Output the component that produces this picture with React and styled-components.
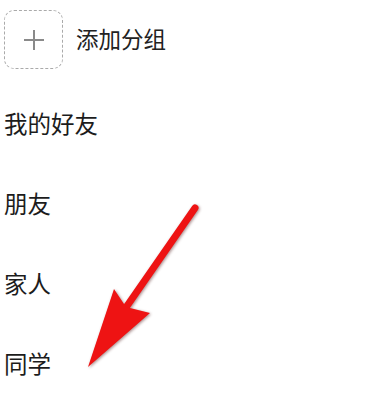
import React from "react";
import styled, { createGlobalStyle } from "styled-components";

const Global = createGlobalStyle`
  html, body { margin: 0; padding: 0; background: #ffffff; }
  body { font-family: "Noto Sans CJK SC", "Noto Sans", sans-serif; }
`;

const Page = styled.div`
  position: relative;
  width: 369px;
  height: 395px;
  overflow: hidden;
  background: #fff;
  padding: 10px 0 0 4px;
  box-sizing: border-box;
`;

const Header = styled.div`
  display: flex;
  align-items: center;
  gap: 13px;
  height: 59px;
`;

const AddBox = styled.div`
  width: 59px;
  height: 59px;
  box-sizing: border-box;
  border: 1.5px dashed #aaaaaa;
  border-radius: 10px;
  display: flex;
  align-items: center;
  justify-content: center;
`;

const HeaderLabel = styled.span`
  font-size: 22.5px;
  color: #222;
  line-height: 1;
  padding-bottom: 2px;
`;

const List = styled.div`
  margin-top: 15px;
  display: flex;
  flex-direction: column;
`;

const Item = styled.div`
  height: 80px;
  box-sizing: border-box;
  padding-bottom: 3px;
  display: flex;
  align-items: center;
  font-size: 23.5px;
  color: #1c1c1c;
`;

const ArrowLayer = styled.svg`
  position: absolute;
  left: 0;
  top: 0;
  width: 369px;
  height: 395px;
  pointer-events: none;
  filter: drop-shadow(1.5px 1.5px 1.5px rgba(60, 0, 0, 0.45));
`;

const groups = ["我的好友", "朋友", "家人", "同学"];

export default function App() {
  return (
    <>
      <Global />
      <Page>
        <Header>
          <AddBox>
            <svg width="22" height="22" viewBox="0 0 22 22">
              <path d="M11 1v20M1 11h20" stroke="#8a8a8a" strokeWidth="2" fill="none" />
            </svg>
          </AddBox>
          <HeaderLabel>添加分组</HeaderLabel>
        </Header>
        <List>
          {groups.map((g) => (
            <Item key={g}>{g}</Item>
          ))}
        </List>
        <ArrowLayer viewBox="0 0 369 395">
          <line x1="195" y1="208" x2="127" y2="306" stroke="#ee1313" strokeWidth="7" strokeLinecap="round" />
          <polygon points="88,367 114,289 126,307 150,313" fill="#ee1313" />
        </ArrowLayer>
      </Page>
    </>
  );
}
